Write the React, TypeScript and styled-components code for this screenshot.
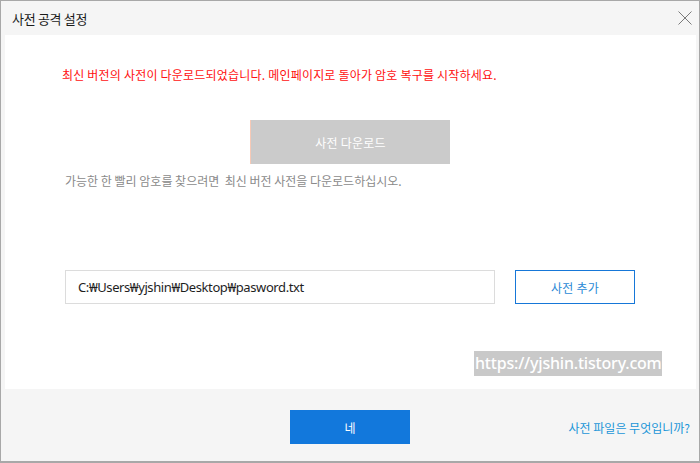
import React from "react";
import styled, { createGlobalStyle } from "styled-components";

const Global = createGlobalStyle`
  html, body { margin: 0; padding: 0; background: #ffffff; }
  body { font-family: "Noto Sans CJK KR", "Noto Sans", sans-serif; }
  * { box-sizing: border-box; }
`;

const Dialog = styled.div`
  width: 700px;
  height: 463px;
  border: 1px solid #a8a8a8;
  border-bottom-width: 2px;
  background: #f5f5f5;
  display: flex;
  flex-direction: column;
`;

const Header = styled.div`
  height: 34px;
  display: flex;
  align-items: center;
  justify-content: space-between;
  padding: 0 5px 0 11px;
`;

const Title = styled.div`
  font-size: 13px;
  color: #1a1a1a;
  letter-spacing: -0.3px;
`;

const Close = styled.button`
  width: 18px;
  height: 18px;
  border: none;
  background: transparent;
  padding: 0;
  display: flex;
  align-items: center;
  justify-content: center;
  cursor: pointer;
`;

const Panel = styled.div`
  margin: 0 3px 0 4px;
  background: #ffffff;
  height: 354px;
  display: flex;
  flex-direction: column;
  padding: 31px 0 0 57px;
`;

const Notice = styled.div`
  color: #ff1010;
  font-size: 12px;
  letter-spacing: 0.2px;
  line-height: 18px;
`;

const DownloadRow = styled.div`
  margin-top: 36px;
  padding-left: 188px;
`;

const DownloadButton = styled.button`
  width: 200px;
  height: 44px;
  background: #cbcbcb;
  border: none;
  border-left: 1px solid #f7c9b6;
  color: #ffffff;
  font-family: inherit;
  font-size: 12px;
  letter-spacing: 0.2px;
`;

const Hint = styled.div`
  margin-top: 8px;
  padding-left: 3px;
  color: #8a8a8a;
  font-size: 12px;
  letter-spacing: 0;
  line-height: 18px;
`;

const PathRow = styled.div`
  margin-top: 80px;
  padding-left: 3px;
  display: flex;
  gap: 20px;
`;

const PathInput = styled.div`
  width: 430px;
  height: 34px;
  border: 1px solid #dcdcdc;
  display: flex;
  align-items: center;
  padding-left: 12px;
  font-family: "Noto Sans", sans-serif;
  font-size: 13px;
  color: #1e1e1e;
  letter-spacing: -0.4px;
`;

const AddButton = styled.button`
  width: 120px;
  height: 34px;
  border: 1px solid #1677d8;
  background: #ffffff;
  color: #2b8ad6;
  font-family: inherit;
  font-size: 12px;
  letter-spacing: 0.2px;
`;

const WatermarkRow = styled.div`
  margin-top: 47px;
  display: flex;
  padding-left: 412px;
`;

const Watermark = styled.div`
  background: #c9c9c9;
  color: #ffffff;
  font-family: "Noto Sans", sans-serif;
  font-size: 16px;
  font-weight: 500;
  line-height: 25px;
  letter-spacing: -0.2px;
  padding: 0 1px;
  width: 188px;
  white-space: nowrap;
`;

const Footer = styled.div`
  flex: 1;
  display: flex;
  align-items: center;
  padding: 4px 9px 0 289px;
`;

const OkButton = styled.button`
  width: 120px;
  height: 34px;
  background: #1278dc;
  border: none;
  color: #ffffff;
  font-family: inherit;
  font-size: 12px;
`;

const HelpLink = styled.a`
  margin-left: auto;
  color: #1a95d8;
  font-size: 12px;
  letter-spacing: 0;
  text-decoration: none;
  cursor: pointer;
`;

export default function App() {
  return (
    <>
      <Global />
      <Dialog>
        <Header>
          <Title>사전 공격 설정</Title>
          <Close aria-label="close">
            <svg width="16" height="16" viewBox="0 0 16 16">
              <path d="M1.5 1.5 L14.5 14.5 M14.5 1.5 L1.5 14.5" stroke="#7a7a7a" strokeWidth="1" fill="none" />
            </svg>
          </Close>
        </Header>
        <Panel>
          <Notice>최신 버전의 사전이 다운로드되었습니다. 메인페이지로 돌아가 암호 복구를 시작하세요.</Notice>
          <DownloadRow>
            <DownloadButton>사전 다운로드</DownloadButton>
          </DownloadRow>
          <Hint>가능한 한 빨리 암호를 찾으려면&nbsp; 최신 버전 사전을 다운로드하십시오.</Hint>
          <PathRow>
            <PathInput>C:₩Users₩yjshin₩Desktop₩pasword.txt</PathInput>
            <AddButton>사전 추가</AddButton>
          </PathRow>
          <WatermarkRow>
            <Watermark>https://yjshin.tistory.com</Watermark>
          </WatermarkRow>
        </Panel>
        <Footer>
          <OkButton>네</OkButton>
          <HelpLink>사전 파일은 무엇입니까?</HelpLink>
        </Footer>
      </Dialog>
    </>
  );
}
